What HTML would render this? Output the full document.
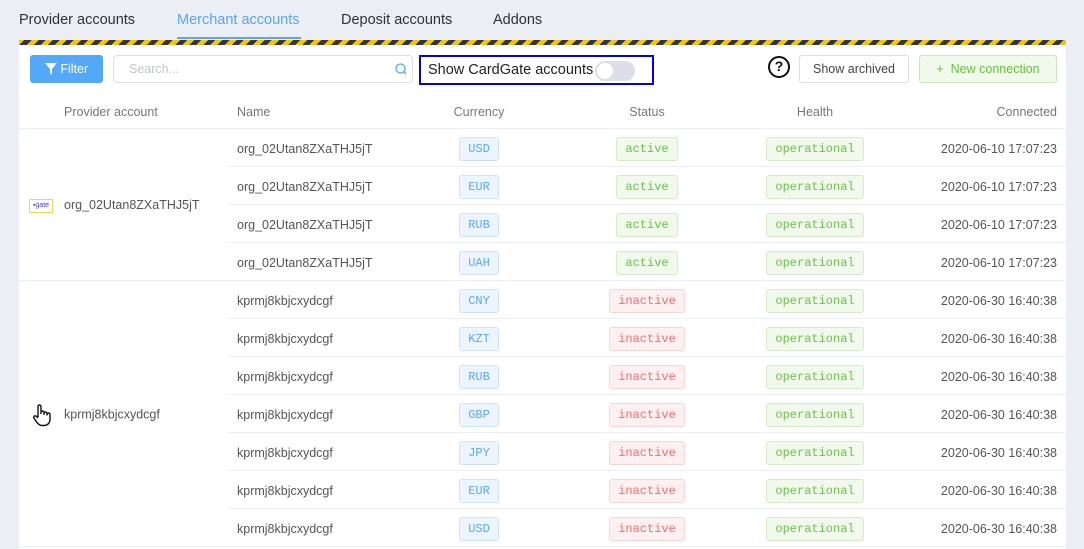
<!DOCTYPE html>
<html><head><style>
*{box-sizing:border-box;margin:0;padding:0}
body{width:1084px;height:549px;overflow:hidden;background:#ebeef5;font-family:"Liberation Sans",sans-serif;color:#333;position:relative}
.tab{position:absolute;top:12px;font-size:14.5px;color:#303133}
.tab.a{color:#58a6f4}
.ul{position:absolute;left:177px;top:37px;width:124px;height:2px;background:#58a6f4}
.stripe{position:absolute;left:19px;top:40px;width:1047px;height:5px;background:repeating-linear-gradient(-45deg,#f3c316 0 5px,#303540 5px 10px)}
.panel{position:absolute;left:19px;top:45px;width:1047px;height:504px;background:#fff}
.btn{position:absolute;border-radius:3px;font-size:12.5px;display:flex;align-items:center;justify-content:center}
table{position:absolute;left:0;top:0;border-collapse:collapse;width:1047px;table-layout:fixed}
td{height:38px;border-bottom:1px solid #ebeef5;font-size:12.5px;color:#555;padding-top:3px}
.b{display:inline-block;font-family:"Liberation Mono",monospace;font-size:12px;padding:0 8px;height:24px;line-height:22px;border-radius:3px;border:1px solid}
.cur{color:#5ba8f5;background:#ecf5ff;border-color:#cce3fc}
.act{color:#6ac249;background:#f0f9eb;border-color:#d4edc6}
.ina{color:#f56c6c;background:#fef0f0;border-color:#fbd3d3}
.c{text-align:center}
.h td{color:#777;padding-top:7px}
</style></head><body>
<div class="tab" style="left:19px">Provider accounts</div>
<div class="tab a" style="left:177px">Merchant accounts</div>
<div class="tab" style="left:341px">Deposit accounts</div>
<div class="tab" style="left:493px">Addons</div>
<div class="ul"></div>
<div class="stripe"></div>
<div class="panel">
<div class="btn" style="left:11px;top:10px;width:73px;height:28px;background:#53a8f7;color:#fff"><svg width="12" height="12" viewBox="0 0 12 12"><path d="M0 0H12L7 6V12L5 10V6Z" fill="#fff"/></svg>&nbsp;Filter</div>
<div style="position:absolute;left:94px;top:10px;width:300px;height:28px;border:1px solid #dcdfe6;border-radius:4px;font-size:12.5px;color:#c0c4cc;padding:6px 15px">Search...<svg style="position:absolute;right:5px;top:7px" width="12" height="12"><circle cx="5.5" cy="5.5" r="4.5" fill="none" stroke="#58a6f4" stroke-width="1.3"/><path d="M9 9L11 11" stroke="#58a6f4" stroke-width="1.3"/></svg></div>
<div style="position:absolute;left:400px;top:10px;width:235px;height:30px;border:2px solid #0000ee;font-size:14.5px;color:#222;padding:5px 7px">Show CardGate accounts<span style="position:absolute;left:174px;top:4px;width:40px;height:20px;border-radius:10px;background:#dcdfe6"><span style="position:absolute;left:2px;top:2px;width:16px;height:16px;border-radius:8px;background:#fff"></span></span></div>
<div style="position:absolute;left:749px;top:11px;width:22px;height:22px;border:2.5px solid #111;border-radius:50%;font-weight:bold;font-size:14px;text-align:center;line-height:17px;color:#111">?</div>
<div class="btn" style="left:780px;top:10px;width:110px;height:28px;border:1px solid #dcdfe6;color:#444">Show archived</div>
<div class="btn" style="left:900px;top:10px;width:138px;height:28px;border:1px solid #c7e9b6;background:#f0f9eb;color:#67c23a">+&nbsp;&nbsp;New connection</div>
<table style="top:45px">
<colgroup><col style="width:208px"><col style="width:152px"><col style="width:200px"><col style="width:136px"><col style="width:200px"><col></colgroup>
<tr class="h"><td style="padding-left:45px">Provider account</td><td style="padding-left:10px">Name</td><td class="c">Currency</td><td class="c">Status</td><td class="c">Health</td><td style="text-align:right;padding-right:9px">Connected</td></tr>
<tr><td rowspan="4" style="padding-left:10px"><span style="display:inline-block;width:24px;height:14px;border:1px solid #f5d64a;font-size:7px;color:#3c3cff;vertical-align:middle;text-align:center;line-height:12px;margin-right:11px">▪gate</span>org_02Utan8ZXaTHJ5jT</td><td style="padding-left:10px">org_02Utan8ZXaTHJ5jT</td><td class="c"><span class="b cur">USD</span></td><td class="c"><span class="b act">active</span></td><td class="c"><span class="b act">operational</span></td><td style="text-align:right;padding-right:9px">2020-06-10 17:07:23</td></tr>
<tr><td style="padding-left:10px">org_02Utan8ZXaTHJ5jT</td><td class="c"><span class="b cur">EUR</span></td><td class="c"><span class="b act">active</span></td><td class="c"><span class="b act">operational</span></td><td style="text-align:right;padding-right:9px">2020-06-10 17:07:23</td></tr>
<tr><td style="padding-left:10px">org_02Utan8ZXaTHJ5jT</td><td class="c"><span class="b cur">RUB</span></td><td class="c"><span class="b act">active</span></td><td class="c"><span class="b act">operational</span></td><td style="text-align:right;padding-right:9px">2020-06-10 17:07:23</td></tr>
<tr><td style="padding-left:10px">org_02Utan8ZXaTHJ5jT</td><td class="c"><span class="b cur">UAH</span></td><td class="c"><span class="b act">active</span></td><td class="c"><span class="b act">operational</span></td><td style="text-align:right;padding-right:9px">2020-06-10 17:07:23</td></tr>
<tr><td rowspan="7" style="padding-left:12px"><svg width="22" height="24" viewBox="0 0 22 24" style="vertical-align:middle;margin-right:11px"><path d="M7 14V3.5a1.5 1.5 0 0 1 3 0V11M10 9.5a1.5 1.5 0 0 1 3 0V12M13 10.5a1.5 1.5 0 0 1 3 0V12.5M16 11.5a1.5 1.5 0 0 1 3 0V16c0 4-2.5 6.5-6 6.5h-2c-2.5 0-3.8-1.3-5.2-3.3L3 15.2a1.5 1.5 0 0 1 2.4-1.8L7 15" fill="#fff" stroke="#111" stroke-width="1.4" stroke-linejoin="round"/></svg>kprmj8kbjcxydcgf</td><td style="padding-left:10px">kprmj8kbjcxydcgf</td><td class="c"><span class="b cur">CNY</span></td><td class="c"><span class="b ina">inactive</span></td><td class="c"><span class="b act">operational</span></td><td style="text-align:right;padding-right:9px">2020-06-30 16:40:38</td></tr>
<tr><td style="padding-left:10px">kprmj8kbjcxydcgf</td><td class="c"><span class="b cur">KZT</span></td><td class="c"><span class="b ina">inactive</span></td><td class="c"><span class="b act">operational</span></td><td style="text-align:right;padding-right:9px">2020-06-30 16:40:38</td></tr>
<tr><td style="padding-left:10px">kprmj8kbjcxydcgf</td><td class="c"><span class="b cur">RUB</span></td><td class="c"><span class="b ina">inactive</span></td><td class="c"><span class="b act">operational</span></td><td style="text-align:right;padding-right:9px">2020-06-30 16:40:38</td></tr>
<tr><td style="padding-left:10px">kprmj8kbjcxydcgf</td><td class="c"><span class="b cur">GBP</span></td><td class="c"><span class="b ina">inactive</span></td><td class="c"><span class="b act">operational</span></td><td style="text-align:right;padding-right:9px">2020-06-30 16:40:38</td></tr>
<tr><td style="padding-left:10px">kprmj8kbjcxydcgf</td><td class="c"><span class="b cur">JPY</span></td><td class="c"><span class="b ina">inactive</span></td><td class="c"><span class="b act">operational</span></td><td style="text-align:right;padding-right:9px">2020-06-30 16:40:38</td></tr>
<tr><td style="padding-left:10px">kprmj8kbjcxydcgf</td><td class="c"><span class="b cur">EUR</span></td><td class="c"><span class="b ina">inactive</span></td><td class="c"><span class="b act">operational</span></td><td style="text-align:right;padding-right:9px">2020-06-30 16:40:38</td></tr>
<tr><td style="padding-left:10px">kprmj8kbjcxydcgf</td><td class="c"><span class="b cur">USD</span></td><td class="c"><span class="b ina">inactive</span></td><td class="c"><span class="b act">operational</span></td><td style="text-align:right;padding-right:9px">2020-06-30 16:40:38</td></tr>
</table>
</div>
</body></html>
